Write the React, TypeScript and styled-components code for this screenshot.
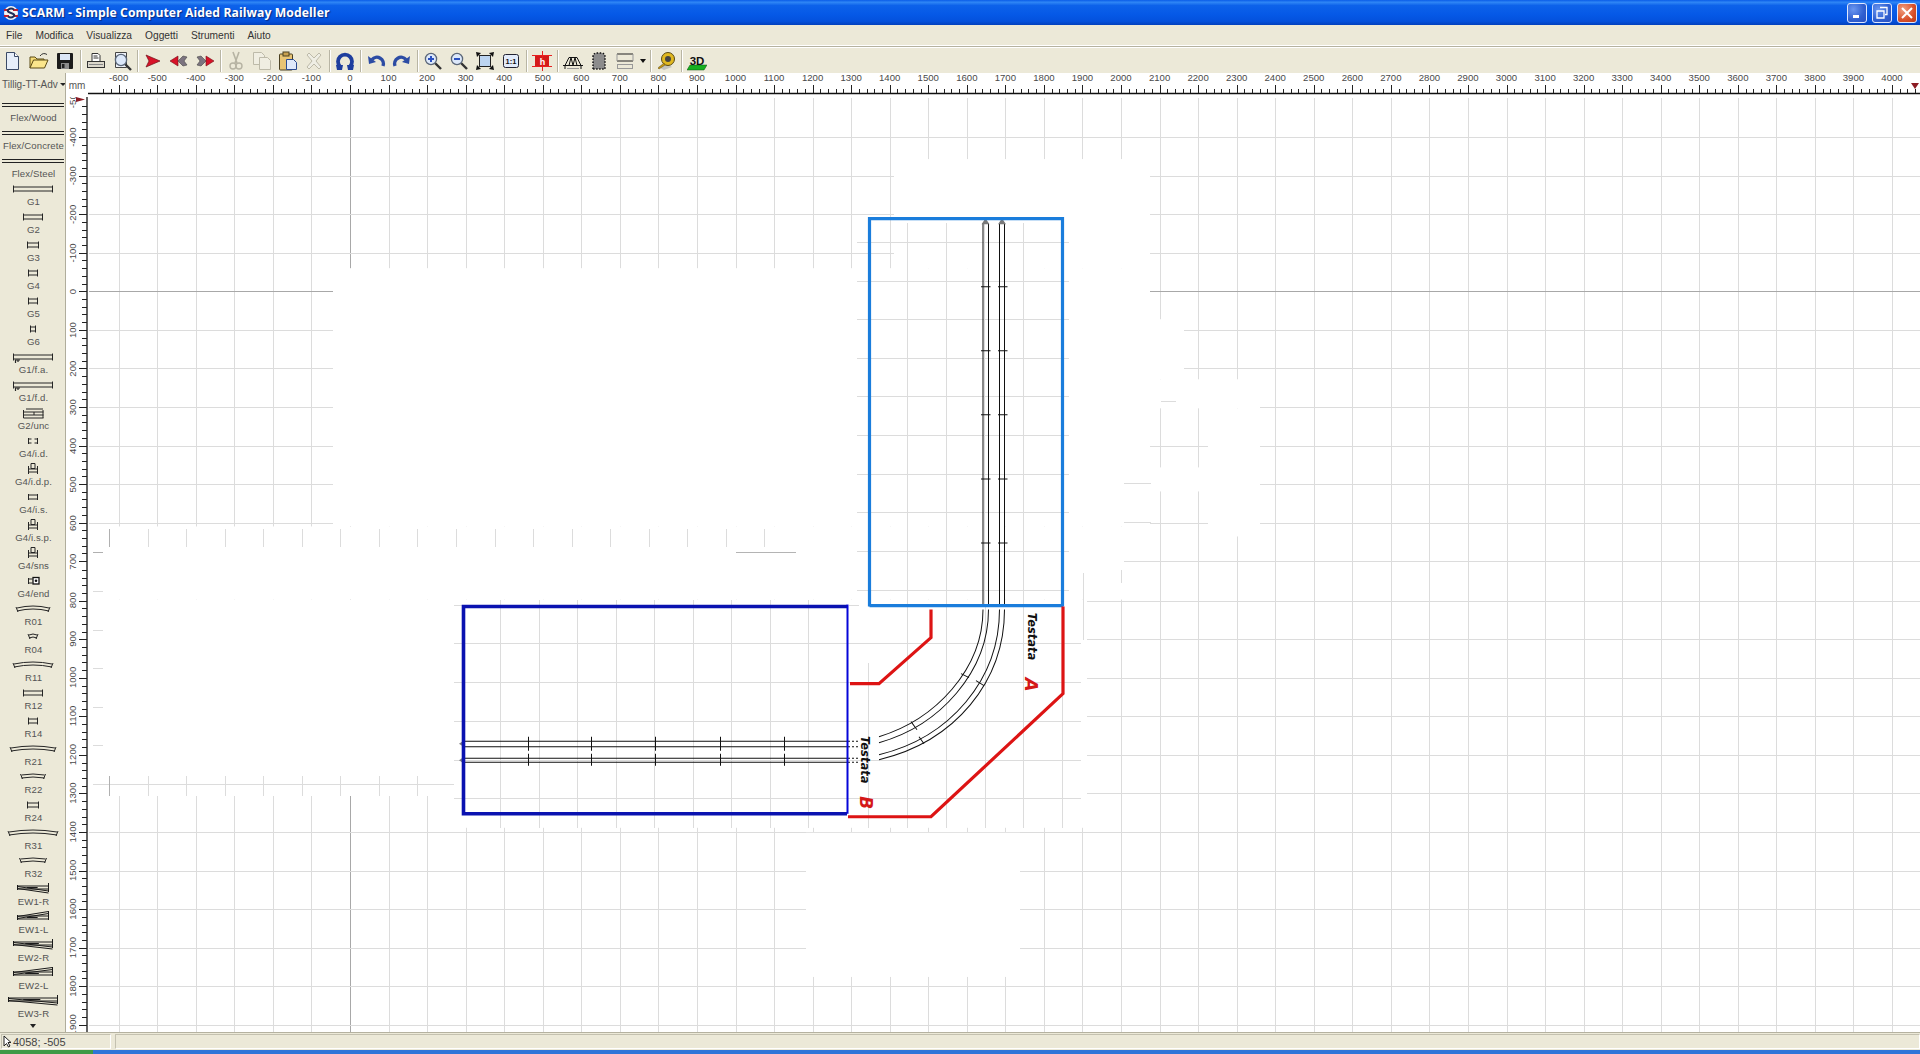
import React from "react";
import styled, { createGlobalStyle } from "styled-components";

const Global = createGlobalStyle`
  html, body { margin: 0; padding: 0; height: 100%; overflow: hidden; background: #ece9d8; }
  #root { height: 100%; }
  * { box-sizing: border-box; }
`;

const Win = styled.div`
  width: 1920px; height: 1054px; display: flex; flex-direction: column;
  font-family: "Liberation Sans", Arial, sans-serif; background: #ece9d8; overflow: hidden;
`;
const TitleBar = styled.div`
  height: 25px; flex: none; display: flex; align-items: center; padding: 0 3px 0 2px; gap: 2px;
  background: linear-gradient(180deg, #0a5ce8 0%, #2f86f5 9%, #0d62ea 22%, #0558e6 60%, #0451dc 85%, #0240bc 100%);
`;
const TitleText = styled.div`
  color: #fff; font-weight: 700; font-size: 12.2px; flex: 1; text-shadow: 1px 1px 1px #0a2a80;
  font-family: "Open Sans", "Liberation Sans", sans-serif; letter-spacing: 0.08px;
`;
const WinButton = styled.div<{ $close?: boolean }>`
  width: 20px; height: 20px; border: 1px solid #dfe8ff; border-radius: 3px; margin-left: 3px; display: flex; align-items: center; justify-content: center;
  background: ${p => p.$close ? "radial-gradient(circle at 30% 30%, #f0a080, #d8502a 60%, #b83a18)" : "radial-gradient(circle at 30% 30%, #6a96f0, #2f5fd0 60%, #2a50c0)"};
`;
const MenuBar = styled.div`
  height: 21px; flex: none; display: flex; align-items: center; padding-left: 6px; gap: 13px; font-size: 10.2px; color: #333;
  border-bottom: 1px solid #fff;
`;
const MenuItem = styled.span``;
const Divider = styled.div`height: 1px; flex: none; background: #b5b2a0;`;
const Toolbar = styled.div`
  height: 26px; flex: none; display: flex; align-items: center; background: #ece9d8; border-top: 1px solid #fff;
`;
const ToolButton = styled.div`width: 26px; height: 24px; display: flex; align-items: center; justify-content: center;`;
const Caret = styled.div`
  width: 10px; height: 24px; display: flex; align-items: center; justify-content: center;
  &::after { content: ""; border: 3px solid transparent; border-top: 4px solid #111; margin-top: 4px; }
`;
const ToolSep = styled.div`
  width: 5px; height: 22px; flex: none; position: relative;
  &::after { content: ""; display: block; width: 1px; height: 22px; margin-left: 2px; background: #b8b5a4; box-shadow: 1px 0 0 #fff; }
`;
const Main = styled.div`flex: 1; min-height: 0; display: flex;`;
const Palette = styled.div`
  width: 66px; flex: none; display: flex; flex-direction: column; background: #ece9d8; border-right: 1px solid #b0ad9c; overflow: hidden;
`;
const LibSelect = styled.div`
  height: 22px; flex: none; display: flex; align-items: center; font-size: 10px; color: #555; padding-left: 2px; gap: 2px; white-space: nowrap;
  &::after { content: ""; border: 3px solid transparent; border-top: 3px solid #222; margin-top: 3px; }
`;
const PaletteItem = styled.div`height: 28px; flex: none; display: flex; flex-direction: column; align-items: center; padding-top: 2px;`;
const PaletteLabel = styled.div`font-size: 9.6px; line-height: 11px; margin-top: 1px; padding-left: 2px; color: #555; white-space: nowrap; letter-spacing: 0.1px;`;
const MoreArrow = styled.div`
  flex: 1; display: flex; justify-content: center; align-items: center;
  &::after { content: ""; border: 3px solid transparent; border-top: 4px solid #222; margin-top: 3px; }
`;
const Work = styled.div`
  flex: 1; min-width: 0; display: grid; grid-template-columns: 22px 1fr; grid-template-rows: 24px 1fr; background: #fff;
`;
const Corner = styled.div`font-size: 10px; color: #555; display: flex; align-items: flex-end; justify-content: center; padding: 0 0 6px 0;`;
const Drawing = styled.svg`display: block; width: 100%; height: 100%;`;
const RulerLabel = styled.text`font-family: "Liberation Sans", sans-serif; font-size: 9.6px; fill: #4a4a4a;`;
const StatusBar = styled.div`height: 18px; flex: none; display: flex; gap: 4px; padding: 1px 0 1px 1px; background: #ece9d8; border-top: 1px solid #b5b2a0;`;
const StatusPane = styled.div<{ $grow?: boolean }>`
  ${p => p.$grow ? "flex: 1;" : "width: 110px;"}
  display: flex; align-items: center; gap: 1px; padding-left: 1px; font-size: 11px; color: #444;
  border: 1px solid; border-color: #c4c1b0 #fff #fff #c4c1b0;
`;
const TaskStrip = styled.div`height: 4px; flex: none; display: flex; background: #2f74d8;`;
const StartStrip = styled.div`width: 93px; background: #3f9a48;`;

const X = (n: number) => 350 + 38.55 * n;
const Y = (n: number) => 292.3 + 38.55 * n;
const r = (v: number) => Math.round(v) + 0.5;
const range = (a: number, b: number) => Array.from({ length: b - a + 1 }, (_, i) => a + i);

/* ---------- toolbar icons ---------- */
const I = ({ children }: { children: React.ReactNode }) => <svg width="20" height="20" viewBox="0 0 20 20">{children}</svg>;
const mag = (x: number, y: number, sign: "+" | "-" | "") => (
  <>
    <path d={`M${x + 4} ${y + 4}L${x + 10} ${y + 10}`} stroke="#333" strokeWidth="2.4" />
    <circle cx={x} cy={y} r="5.6" fill="#dce8fa" stroke="#5a6678" strokeWidth="1.3" />
    {sign && <path d={`M${x - 3} ${y}h6`} stroke="#2a50c0" strokeWidth="2" />}
    {sign === "+" && <path d={`M${x} ${y - 3}v6`} stroke="#2a50c0" strokeWidth="2" />}
  </>
);
const tools: Record<string, React.ReactNode> = {
  new: <I><path d="M3.5 1.5h8l4 4v13h-12z" fill="#e6eefa" stroke="#3a4a66" /><path d="M11.5 1.5v4h4" fill="#fff" stroke="#3a4a66" /></I>,
  open: <I><path d="M1 17V6h5l2 2h7v2" fill="#f6dc78" stroke="#5a4a14" /><path d="M1 17l3.5-8H19l-3.5 8z" fill="#fbe68c" stroke="#5a4a14" /><path d="M11 5q3-4 7-1.500" fill="none" stroke="#333" /></I>,
  save: <I><rect x="2" y="2" width="16" height="16" rx="1" fill="#1c1c1c" /><rect x="5" y="3" width="10" height="6" fill="#dbe6f6" /><rect x="6" y="12" width="8" height="6" fill="#8c8c8c" /><rect x="7" y="13" width="2.500" height="4" fill="#222" /></I>,
  print: <I><path d="M6 2.500h6l2 2v6H6z" fill="#fff" stroke="#333" /><path d="M7.500 5h4M7.500 7h5" stroke="#333" /><rect x="1.500" y="10.500" width="17" height="6" fill="#dcd8cc" stroke="#333" /><path d="M3 13.500h14" stroke="#888" /></I>,
  preview: <I><path d="M3.500 1.500h11v15h-11z" fill="#eef2fa" stroke="#444" />{mag(9, 9, "")}</I>,
  arrow: <I><path d="M3 4l14 6-14 6 3-6z" fill="#d81228" stroke="#701018" strokeWidth=".7" /></I>,
  back: <I><path d="M1 10l8-5v10z" fill="#d81228" stroke="#701018" strokeWidth=".6" /><path d="M9 10l5-5 4 1-3 4 3 4-4 1z" fill="#7c7480" stroke="#444" strokeWidth=".6" /></I>,
  fwd: <I><path d="M2 6l4-1 5 5-5 5-4-1 3-4z" fill="#7c7480" stroke="#444" strokeWidth=".6" /><path d="M19 10l-8-5v10z" fill="#d81228" stroke="#701018" strokeWidth=".6" /></I>,
  cut: <I><path d="M7 1l4 11M13 1L9 12" stroke="#b6b3a3" strokeWidth="1.6" /><circle cx="7" cy="15" r="3" fill="none" stroke="#b6b3a3" strokeWidth="1.4" /><circle cx="13" cy="15" r="3" fill="none" stroke="#b6b3a3" strokeWidth="1.4" /></I>,
  copy: <I><path d="M1.500 1.500h8l3 3v9h-11z" fill="#f0eee2" stroke="#bdbaa9" /><path d="M7.500 6.500h8l3 3v9h-11z" fill="#f0eee2" stroke="#bdbaa9" /></I>,
  paste: <I><rect x="1.500" y="3" width="13" height="16" rx="1" fill="#e8c474" stroke="#4a4020" /><rect x="5" y="1" width="6" height="4" fill="#c8a050" stroke="#4a4020" /><path d="M8.500 8.500h7l3 3v7h-10z" fill="#dfe9fa" stroke="#2a4a90" /></I>,
  del: <I><path d="M3 4l2-2 5 5 5-5 2 2-5 6 5 6-2 2-5-5-5 5-2-2 5-6z" fill="#efeee4" stroke="#bdbaa9" /></I>,
  rotate: <I><path d="M5 15.500A7 7 0 1 1 15 15.500" fill="none" stroke="#1e3e9e" strokeWidth="3.800" /><path d="M1 14h7l-1 5H2zM12 14h7l-1 5h-5z" fill="#1e3e9e" /></I>,
  undo: <I><path d="M17 15A6.500 6.500 0 0 0 6 8.500" fill="none" stroke="#2c4ca4" strokeWidth="3.400" /><path d="M2 5l1 8 7-2z" fill="#2c4ca4" /></I>,
  redo: <I><path d="M3 15A6.500 6.500 0 0 1 14 8.500" fill="none" stroke="#2c4ca4" strokeWidth="3.400" /><path d="M18 5l-1 8-7-2z" fill="#2c4ca4" /></I>,
  zin: <I>{mag(8, 8, "+")}</I>,
  zout: <I>{mag(8, 8, "-")}</I>,
  fit: <I><rect x="4.500" y="4.500" width="11" height="11" fill="#bcd4f0" stroke="#222" /><path d="M1 1l5 1-4 4zM19 1l-1 5-4-4zM1 19l1-5 4 4zM19 19l-5-1 4-4z" fill="#111" /></I>,
  one: <I><rect x="2.500" y="3.500" width="15" height="13" rx="2" fill="#e2ebfa" stroke="#223" /><text x="10" y="12.800" textAnchor="middle" fontSize="7.500" fontWeight="700" fontFamily="Liberation Sans" fill="#111">1:1</text></I>,
  red: <I><rect x="3" y="5" width="14" height="10" fill="#d41a1a" /><path d="M0 4.500h20M0 15.500h20M10.500 0v20" stroke="#e82020" /><text x="10.500" y="14" textAnchor="middle" fontSize="9" fontWeight="700" fontFamily="Liberation Sans" fill="#fff">h</text></I>,
  bridge: <I><path d="M0 14.500h20M2 14.500L6 6.500h8l4 8M2 18V14M18 18V14M6 14.500l2-8 2 8 2-8 2 8" fill="none" stroke="#111" strokeWidth="1" /><path d="M4 17.500h12" stroke="#999" /></I>,
  tunnel: <I><path d="M4 18V6q0-4 4-4h4q4 0 4 4v12z" fill="#8c8c8c" stroke="#111" strokeDasharray="1.500 1.500" strokeWidth="1.500" /></I>,
  layers: <I><path d="M2 3h16M2 10h16" stroke="#222" strokeWidth="1.200" /><path d="M2 3v7M18 3v7" stroke="#999" /><rect x="2.500" y="13.500" width="15" height="4" fill="#ece9d8" stroke="#999" /></I>,
  tape: <I><path d="M2 16l6 3 8-3-6-4z" fill="#aaa" opacity=".6" /><circle cx="12" cy="8" r="6.500" fill="#e0b820" stroke="#5a4a14" /><circle cx="12" cy="8" r="3" fill="#444" /><path d="M8 12L2 17l1 1 6-4z" fill="#c89810" stroke="#5a4a14" strokeWidth=".5" /></I>,
  three: <I><path d="M3 14h17l-3 5H0z" fill="#16b020" stroke="#0a5010" strokeWidth=".5" /><text x="10" y="13.500" textAnchor="middle" fontSize="11.500" fontWeight="700" fontFamily="Liberation Sans" fill="#111">3D</text></I>,
};
const toolRows: string[] = ["new", "open", "save", "|", "print", "preview", "|", "arrow", "back", "fwd", "|", "cut", "copy", "paste", "del", "|", "rotate", "|", "undo", "redo", "|", "zin", "zout", "fit", "one", "|", "red", "|", "bridge", "tunnel", "layers", "v", "|", "tape", "|", "three"];

/* ---------- palette icons ---------- */
type Icon = { kind: string; w?: number };
const INK = "#262626";
const straight = (w: number) => {
  const a = 33 - w / 2, b = 33 + w / 2;
  return <path d={`M${a} 4.500v7M${b} 4.500v7M${a} 6h${w}M${a} 10h${w}`} stroke={INK} fill="none" />;
};
const curve = (w: number, s: number) => {
  const a = 33 - w / 2, b = 33 + w / 2;
  return <path d={`M${a} ${5 + s}Q33 ${5 - s} ${b} ${5 + s}M${a} ${8 + s}Q33 ${8 - s} ${b} ${8 + s}M${a - 1} ${4 + s}l2 5M${b + 1} ${4 + s}l-2 5`} stroke={INK} fill="none" />;
};
const PalIcon = ({ kind, w = 20 }: Icon) => {
  let body: React.ReactNode = null;
  if (kind === "flex") body = <path d="M2 6.500h62M2 9.500h62" stroke="#222" strokeWidth="1.200" />;
  if (kind === "s") body = straight(w);
  if (kind === "fa") body = <>{straight(w)}<path d="M15 11h5M15.500 11v3M18 11v2" stroke={INK} strokeWidth="1.200" /></>;
  if (kind === "unc") body = <path d="M23.500 5v8M43 5v8M23.500 7h20M23.500 10h20M23.500 13h20M26 4h17M34 7v3" stroke={INK} fill="none" />;
  if (kind === "id") body = <path d="M28.500 5v6M37.500 5v6M28.500 6h3M28.500 10h3M34.500 6h3M34.500 10h3" stroke={INK} fill="none" />;
  if (kind === "idp") body = <path d="M28.500 5v8M37.500 5v8M28.500 8h9M28.500 11h9M31 2.500h4v5h-4z" stroke={INK} fill="none" />;
  if (kind === "is") body = <path d="M28.500 5v6M37.500 5v6M28.500 6h9M28.500 10h9" stroke={INK} fill="none" />;
  if (kind === "end") body = <><path d="M28.500 5v6M28.500 6h4M28.500 10h4" stroke={INK} /><rect x="33" y="4.500" width="6" height="6.500" fill="#fff" stroke="#111" strokeWidth="1.300" /><circle cx="36" cy="7.700" r="1.300" fill="#111" /></>;
  if (kind === "c") body = curve(w, 2);
  if (kind === "cf") body = curve(w, 1);
  if (kind === "sw") {
    const a = 33 - w / 2, b = 33 + w / 2;
    body = <path d={`M${a} 4v5M${b} 2v9M${a} 5h${w}M${a} 8h${w}M${a + w * .3} 6.500H${a + w * .65}M${a} 5.500L${b} 10M${a} 7.500L${b} 12`} stroke="#1a1a1a" fill="none" />;
  }
  if (kind === "swl") {
    const a = 33 - w / 2, b = 33 + w / 2;
    body = <path d={`M${a} 6v5M${b} 2v9M${a} 7h${w}M${a} 10h${w}M${a + w * .3} 8.500H${a + w * .65}M${a} 7.500L${b} 2.500M${a} 9.500L${b} 4.500`} stroke="#1a1a1a" fill="none" />;
  }
  return <svg width="66" height="14" viewBox="0 0 66 14">{body}</svg>;
};
const paletteItems: [string, Icon][] = [
  ["Flex/Wood", { kind: "flex" }], ["Flex/Concrete", { kind: "flex" }], ["Flex/Steel", { kind: "flex" }],
  ["G1", { kind: "s", w: 39 }], ["G2", { kind: "s", w: 19 }], ["G3", { kind: "s", w: 11 }], ["G4", { kind: "s", w: 9 }], ["G5", { kind: "s", w: 9 }], ["G6", { kind: "s", w: 5 }],
  ["G1/f.a.", { kind: "fa", w: 39 }], ["G1/f.d.", { kind: "fa", w: 39 }], ["G2/unc", { kind: "unc" }],
  ["G4/i.d.", { kind: "id" }], ["G4/i.d.p.", { kind: "idp" }], ["G4/i.s.", { kind: "is" }], ["G4/i.s.p.", { kind: "idp" }], ["G4/sns", { kind: "idp" }], ["G4/end", { kind: "end" }],
  ["R01", { kind: "c", w: 32 }], ["R04", { kind: "cf", w: 8 }], ["R11", { kind: "c", w: 38 }], ["R12", { kind: "s", w: 19 }], ["R14", { kind: "s", w: 9 }],
  ["R21", { kind: "c", w: 44 }], ["R22", { kind: "cf", w: 23 }], ["R24", { kind: "s", w: 11 }], ["R31", { kind: "c", w: 48 }], ["R32", { kind: "cf", w: 25 }],
  ["EW1-R", { kind: "sw", w: 31 }], ["EW1-L", { kind: "swl", w: 31 }], ["EW2-R", { kind: "sw", w: 39 }], ["EW2-L", { kind: "swl", w: 39 }], ["EW3-R", { kind: "sw", w: 49 }],
];

/* ---------- rulers ---------- */
const TopRuler = () => {
  const ticks = range(-32, 203);
  return (
    <Drawing viewBox="88 74 1832 24" preserveAspectRatio="none">
      <path d="M88 94.500H1920" stroke="#111" strokeWidth="1.300" />
      {ticks.map(t => {
        const x = r(350 + 7.71 * t);
        return <path key={t} d={`M${x} ${t % 5 === 0 ? 86 : 90}V94`} stroke="#222" shapeRendering="crispEdges" />;
      })}
      {range(-6, 40).map(n => <RulerLabel key={n} x={X(n)} y={82} textAnchor="middle">{n * 100}</RulerLabel>)}
      <path d="M1911 84h8l-4 6z" fill="#8c1c24" />
    </Drawing>
  );
};
const LeftRuler = () => {
  const ticks = range(-24, 96);
  return (
    <Drawing viewBox="66 98 22 934" preserveAspectRatio="none">
      <path d="M87 98V1032" stroke="#111" strokeWidth="1.300" />
      {ticks.map(t => {
        const y = r(292.3 + 7.71 * t);
        return <path key={t} d={`M${t % 5 === 0 ? 79 : 82} ${y}H87`} stroke="#222" shapeRendering="crispEdges" />;
      })}
      {range(-5, 19).map(n => <RulerLabel key={n} transform={`translate(76 ${Y(n)}) rotate(-90)`} textAnchor="middle">{n === 0 ? 0 : n * 100}</RulerLabel>)}
      <path d="M76 98l9 2.500-9 2.500z" fill="#8c1c24" />
    </Drawing>
  );
};

/* ---------- canvas ---------- */
const GRID = "#dcdcdc";
const whites = [
  [894, 160, 256, 109], [333, 269, 817, 258], [1150, 320, 34, 60], [1150, 380, 110, 29], [1208, 409, 52, 128],
  [1150, 468, 58, 24], [88, 527, 1062, 73], [88, 600, 999, 228], [806, 833, 214, 144],
];
const seg = (x1: number, y1: number, x2: number, y2: number, c = GRID) => <path key={`${x1}-${y1}-${x2}-${y2}`} d={`M${r(x1)} ${r(y1)}L${r(x2)} ${r(y2)}`} stroke={c} shapeRendering="crispEdges" />;
const LabelText = styled.text`font-family: "DejaVu Sans", sans-serif; font-weight: 700; font-style: italic;`;

const Canvas = () => {
  const track = "#111";
  return (
    <Drawing viewBox="88 98 1832 934" preserveAspectRatio="none">
      {range(-6, 40).map(n => seg(X(n), 98, X(n), 1032, n === 0 ? "#a8a8a8" : GRID))}
      {range(-4, 19).map(n => seg(88, Y(n), 1920, Y(n), n === 0 ? "#a8a8a8" : GRID))}
      {whites.map(w => <rect key={w.join()} x={w[0]} y={w[1]} width={w[2]} height={w[3]} fill="#fff" />)}
      {/* pasted scraps of grid */}
      {range(0, 17).map(k => seg(109 + 38.55 * k, 529, 109 + 38.55 * k, 547, k === 0 ? "#b0b0b0" : GRID))}
      {[591, 630, 668, 707, 745].map(y => seg(92, y, 102, y))}
      {seg(92, 553, 102, 553, "#b0b0b0")}
      {seg(92, 784, 453, 784)}
      {range(0, 8).map(k => seg(109 + 38.55 * k, 776, 109 + 38.55 * k, 796, k === 0 ? "#b0b0b0" : GRID))}
      {range(-6, 2).map(n => seg(X(n), 796, X(n), 830, n === 0 ? "#a8a8a8" : GRID))}
      {seg(735, 553, 795, 553, "#b4b4b4")}
      {[500, 539, 577, 616, 654, 693, 731, 770, 808].map(x => seg(x, 600, x, 828))}
      {[907, 946, 985, 1023].map(x => seg(x, 607, x, 828))}
      {seg(868, 663, 868, 828)}
      {seg(1062, 606, 1062, 828)}
      {[643, 682, 721, 760, 798].map(y => seg(453, y, 1080, y))}
      {seg(453, 605, 462, 605)}
      {seg(848, 605, 858, 605)}
      {[243, 282, 320, 359, 397, 436, 475, 513, 552, 590].map(y => seg(856, y, 1068, y))}
      {[907, 946, 984, 1023].map(x => seg(x, 223, x, 606))}
      {seg(1083, 573, 1083, 640)}
      {seg(1121, 570, 1121, 583)}
      {[484, 523, 562].map(y => seg(1123, y, 1150, y))}
      {seg(1160, 402, 1175, 402)}

      {/* rails: upper module */}
      <g stroke={track} strokeWidth="1" fill="none">
        {[983, 988.5, 999.5, 1004.5].map(x => <path key={x} d={`M${x} 224V606`} />)}
        {[287, 351, 415, 479, 543].map(y => <path key={y} d={`M981 ${y + .5}h9.500M998 ${y + .5}h9.500`} />)}
        {/* rails: lower module */}
        {[741.5, 747, 758.5, 762.5].map(y => <path key={y} d={`M464 ${y}H850M852 ${y}h2M856 ${y}h2`} />)}
        {[528, 591, 655, 720, 784].map(x => <path key={x} d={`M${x + .5} 737v14M${x + .5} 754v12`} />)}
        {/* curve */}
        <path d="M983 610C983 670 935 720 879 737" />
        <path d="M988.500 610C988.500 672 940 726 879 743" />
        <path d="M999.500 610C999.500 680 950 738 879 755" />
        <path d="M1004.500 610C1004.500 682 955 742 879 760" />
        <path d="M961 674l8 4M911 722l6 8M976 681l8 5M919 737l5 7" />
      </g>
      <path d="M985.500 219l4 6h-8zM1002 219l4 6h-8z" fill="#7a7a7a" />
      <path d="M459 744l6-4v8zM459 760.500l6-4v8z" fill="#7a7a80" />

      {/* baseboards */}
      <path d="M869.500 607V219.500H1062.500V607M869.500 606H1063" fill="none" stroke="#1a7ddc" strokeWidth="3.200" />
      <path d="M847 607H463.500V814H847" fill="none" stroke="#0a12b0" strokeWidth="3.600" />
      <path d="M847.500 605V814" fill="none" stroke="#0505d8" strokeWidth="2" />
      <path d="M1063 607V694L931 817H848" fill="none" stroke="#dd1414" strokeWidth="3.200" />
      <path d="M931 610V638L879 684H850" fill="none" stroke="#dd1414" strokeWidth="3.200" />

      <LabelText transform="translate(1028 637) rotate(90)" textAnchor="middle" fontSize="11.500" fill="#111">Testata</LabelText>
      <LabelText transform="translate(1025 685) rotate(90)" textAnchor="middle" fontSize="18" fill="#d41818">A</LabelText>
      <LabelText transform="translate(861 760) rotate(90)" textAnchor="middle" fontSize="11.500" fill="#111">Testata</LabelText>
      <LabelText transform="translate(860 803) rotate(90)" textAnchor="middle" fontSize="17" fill="#d41818">B</LabelText>
    </Drawing>
  );
};

const AppIcon = () => (
  <svg width="18" height="16" viewBox="0 0 18 16">
    <circle cx="9" cy="8" r="7" fill="#f4f4f4" />
    <path d="M2 5h5M11 5h5M2 11h5M11 11h5" stroke="#c02030" strokeWidth="2" />
    <path d="M12 4.500Q9 2.500 6.500 4.500T9 8t2.500 3.500Q9 13.500 6 11.500" fill="none" stroke="#20305a" strokeWidth="2" />
  </svg>
);

export default function App() {
  return (
    <Win>
      <Global />
      <TitleBar>
        <AppIcon />
        <TitleText>SCARM - Simple Computer Aided Railway Modeller</TitleText>
        <WinButton><svg width="12" height="12"><rect x="2" y="8" width="6" height="3" fill="#fff" /></svg></WinButton>
        <WinButton><svg width="14" height="14" viewBox="0 0 14 14"><path d="M5 1.500h7v7h-2M2 5h7v7H2z" fill="none" stroke="#fff" strokeWidth="1.300" /></svg></WinButton>
        <WinButton $close><svg width="14" height="14" viewBox="0 0 14 14"><path d="M2 2l10 10M12 2L2 12" stroke="#fff" strokeWidth="2" /></svg></WinButton>
      </TitleBar>
      <MenuBar>
        {["File", "Modifica", "Visualizza", "Oggetti", "Strumenti", "Aiuto"].map(m => <MenuItem key={m}>{m}</MenuItem>)}
      </MenuBar>
      <Divider />
      <Toolbar>
        {toolRows.map((t, i) => t === "|" ? <ToolSep key={i} /> : t === "v" ? <Caret key={i} /> : <ToolButton key={i}>{tools[t]}</ToolButton>)}
      </Toolbar>
      <Main>
        <Palette>
          <LibSelect>Tillig-TT-Adv</LibSelect>
          {paletteItems.map(([label, icon]) => (
            <PaletteItem key={label}>
              <PalIcon {...icon} />
              <PaletteLabel>{label}</PaletteLabel>
            </PaletteItem>
          ))}
          <MoreArrow />
        </Palette>
        <Work>
          <Corner>mm</Corner>
          <TopRuler />
          <LeftRuler />
          <Canvas />
        </Work>
      </Main>
      <StatusBar>
        <StatusPane>
          <svg width="9" height="13" viewBox="0 0 9 13"><path d="M1 1v10l2.500-2.500L5.500 12l1.500-1-2-3.500H8z" fill="#fff" stroke="#222" /></svg>
          4058; -505
        </StatusPane>
        <StatusPane $grow />
      </StatusBar>
      <TaskStrip><StartStrip /></TaskStrip>
    </Win>
  );
}
